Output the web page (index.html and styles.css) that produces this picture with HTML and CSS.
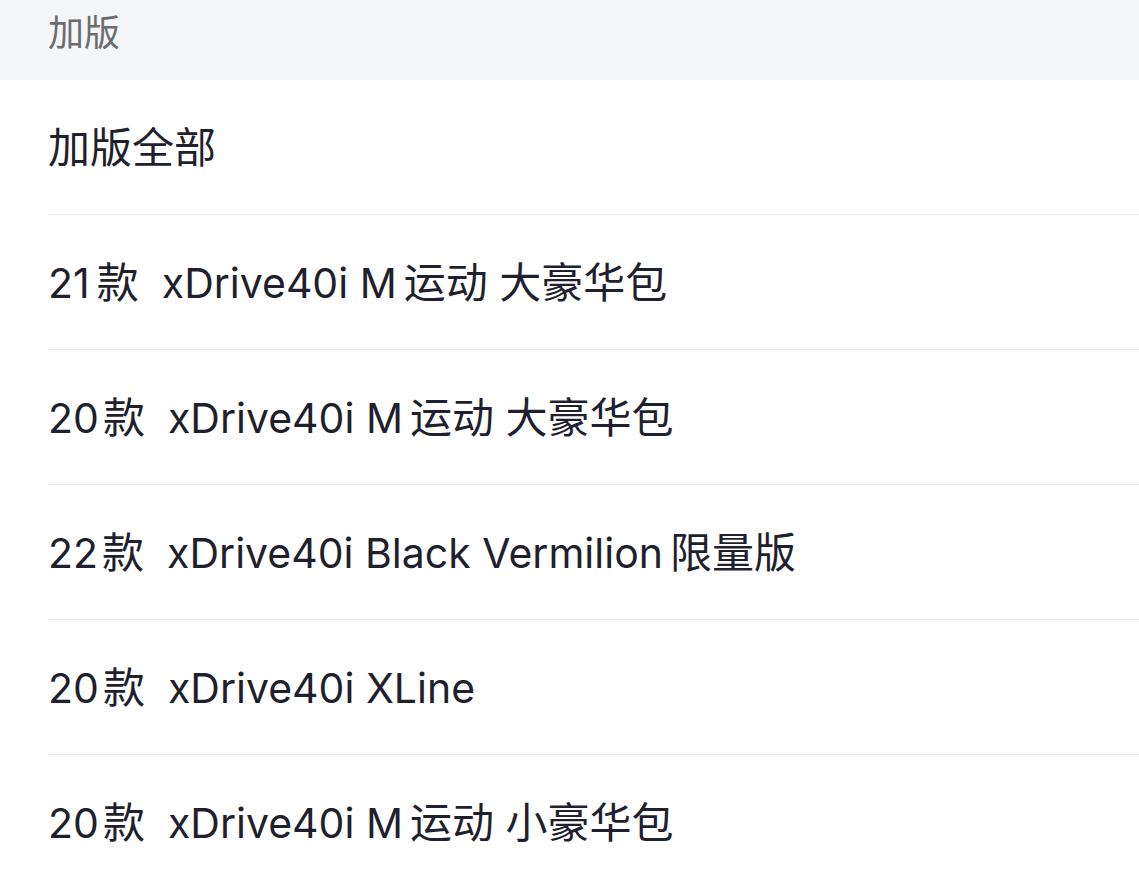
FILE: index.html
```html
<!DOCTYPE html>
<html lang="zh-CN">
<head>
<meta charset="utf-8">
<link rel="stylesheet" href="styles.css">
</head>
<body>
<div class="header">加版</div>
<ul class="list">
  <li class="row"><span class="label"><span class="cjk">加版全部</span></span></li>
  <li class="row"><span class="label">21<span class="cjk gap">款</span>  xDrive40i M<span class="cjk gap">运动</span> <span class="cjk">大豪华包</span></span></li>
  <li class="row"><span class="label">20<span class="cjk gap-sm">款</span>  xDrive40i M<span class="cjk gap">运动</span> <span class="cjk">大豪华包</span></span></li>
  <li class="row"><span class="label">22<span class="cjk gap-sm">款</span>  xDrive40i Black Vermilion<span class="cjk gap">限量版</span></span></li>
  <li class="row"><span class="label">20<span class="cjk gap-sm">款</span>  xDrive40i XLine</span></li>
  <li class="row"><span class="label">20<span class="cjk gap-sm">款</span>  xDrive40i M<span class="cjk gap">运动</span> <span class="cjk">小豪华包</span></span></li>
</ul>
</body>
</html>
```
FILE: styles.css
```css
html, body {
  margin: 0;
  padding: 0;
  background: #ffffff;
}
body {
  font-family: Inter, "Noto Sans CJK SC", sans-serif;
  overflow: hidden;
}
.header {
  height: 80px;
  background: #f5f6f8;
  color: #6b6b70;
  font-size: 36px;
  line-height: 66px;
  padding-left: 48px;
  box-sizing: border-box;
}
.list {
  list-style: none;
  margin: 0;
  padding: 0 0 0 48px;
}
.row {
  height: 135px;
  box-sizing: border-box;
  border-bottom: 1px solid #ebebed;
  padding-bottom: 5px;
  display: flex;
  align-items: center;
  font-size: 41px;
  color: #1f1f2d;
}
.label {
  white-space: pre;
}
.cjk {
  font-size: 42px;
}
.gap {
  margin-left: 7px;
}
.gap-sm {
  margin-left: 4px;
}
```
